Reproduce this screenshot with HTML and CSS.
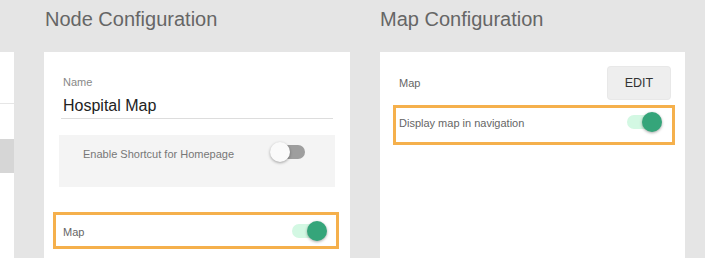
FILE: index.html
```html
<!DOCTYPE html>
<html lang="en">
<head>
<meta charset="utf-8">
<title>Configuration</title>
<link rel="stylesheet" href="styles.css">
</head>
<body>
<div class="page">
  <aside class="side">
    <div class="side-line"></div>
    <div class="side-block"></div>
  </aside>

  <section class="col col-node">
    <h2 class="col-title">Node Configuration</h2>
    <div class="card">
      <div class="field">
        <div class="field-label">Name</div>
        <div class="field-value">Hospital Map</div>
      </div>
      <div class="shortcut">
        <div class="shortcut-row">
          <span class="shortcut-text">Enable Shortcut for Homepage</span>
          <span class="switch"><span class="track"></span><span class="knob"></span></span>
        </div>
      </div>
      <div class="hl-row hl-node">
        <span class="row-text">Map</span>
        <span class="switch on"><span class="track"></span><span class="knob"></span></span>
      </div>
    </div>
  </section>

  <section class="col col-map">
    <h2 class="col-title">Map Configuration</h2>
    <div class="card">
      <div class="map-row">
        <span class="row-text map-label">Map</span>
        <button class="edit-btn" type="button">EDIT</button>
      </div>
      <div class="hl-row hl-map">
        <span class="row-text">Display map in navigation</span>
        <span class="switch on"><span class="track"></span><span class="knob"></span></span>
      </div>
    </div>
  </section>
</div>
</body>
</html>
```

FILE: styles.css
```css
html, body {
  margin: 0;
  padding: 0;
  background: #e5e5e5;
  font-family: "Liberation Sans", Arial, Helvetica, sans-serif;
}

.page {
  display: flex;
  gap: 30px;
  height: 258px;
  overflow: hidden;
}

.side {
  width: 14px;
  margin-top: 52px;
  background: #ffffff;
  display: flex;
  flex-direction: column;
}

.side-line {
  margin-top: 51px;
  height: 1px;
  background: #e6e6e6;
}

.side-block {
  margin-top: 35px;
  height: 34px;
  background: #d6d6d6;
}

.col {
  display: flex;
  flex-direction: column;
}

.col-node { width: 306px; }
.col-map { width: 305px; }

.col-title {
  margin: 0 0 21px 0;
  padding: 7px 0 0 1px;
  font-size: 20px;
  line-height: 24px;
  font-weight: normal;
  color: #666666;
}

.col-map .col-title { padding-left: 0; }

.card {
  flex: 1;
  background: #ffffff;
  padding: 15px;
  display: flex;
  flex-direction: column;
}

.field {
  margin: 9px 2px 0 2px;
  border-bottom: 1px solid #dddddd;
  padding-bottom: 2px;
}

.field-label {
  padding-left: 2px;
  font-size: 11px;
  line-height: 13px;
  color: #888888;
}

.field-value {
  margin-top: 7px;
  padding-left: 2px;
  font-size: 16px;
  line-height: 20px;
  color: #222222;
}

.shortcut {
  margin-top: 16px;
  height: 52px;
  box-sizing: border-box;
  background: #f4f4f4;
  padding: 0 29px 18px 24px;
}

.shortcut-row {
  height: 34px;
  display: flex;
  align-items: center;
  justify-content: space-between;
}

.shortcut-text {
  font-size: 11px;
  color: #777777;
  padding-top: 3px;
}

.row-text {
  font-size: 11px;
  color: #666666;
}

.hl-row {
  display: flex;
  align-items: center;
  justify-content: space-between;
  box-sizing: border-box;
  border: 3px solid #f5b04c;
}

.hl-node {
  margin: 25px -4px 0 -6px;
  height: 37px;
  padding: 0 9px 0 7px;
}

.hl-node .row-text { padding-top: 2px; }

.hl-map {
  margin: 6px -5px 0 -2px;
  height: 40px;
  padding: 0 10px 4px 3px;
}

.hl-map .switch { margin-top: -3px; }

.map-row {
  display: flex;
  align-items: center;
  justify-content: space-between;
}

.map-label { padding-left: 4px; }

.edit-btn {
  width: 62px;
  height: 32px;
  border: none;
  border-radius: 3px;
  background: #eeeeee;
  box-shadow: 0 0 0 1px #e8e8e8;
  font-family: "Liberation Sans", Arial, Helvetica, sans-serif;
  font-size: 12.5px;
  color: #333333;
  padding: 0;
  margin: 0;
}

.switch {
  position: relative;
  display: block;
  width: 36px;
  height: 20px;
  flex: none;
}

.track {
  position: absolute;
  left: 1px;
  top: 3px;
  width: 34px;
  height: 14px;
  border-radius: 7px;
  background: #9e9e9e;
}

.knob {
  position: absolute;
  left: 0;
  top: 0;
  width: 20px;
  height: 20px;
  border-radius: 50%;
  background: #fafafa;
  box-shadow: 0 1px 3px rgba(0, 0, 0, 0.35);
}

.switch.on .track { background: #d3f8e3; }

.switch.on .knob {
  left: 16px;
  background: #35a57a;
}
```
